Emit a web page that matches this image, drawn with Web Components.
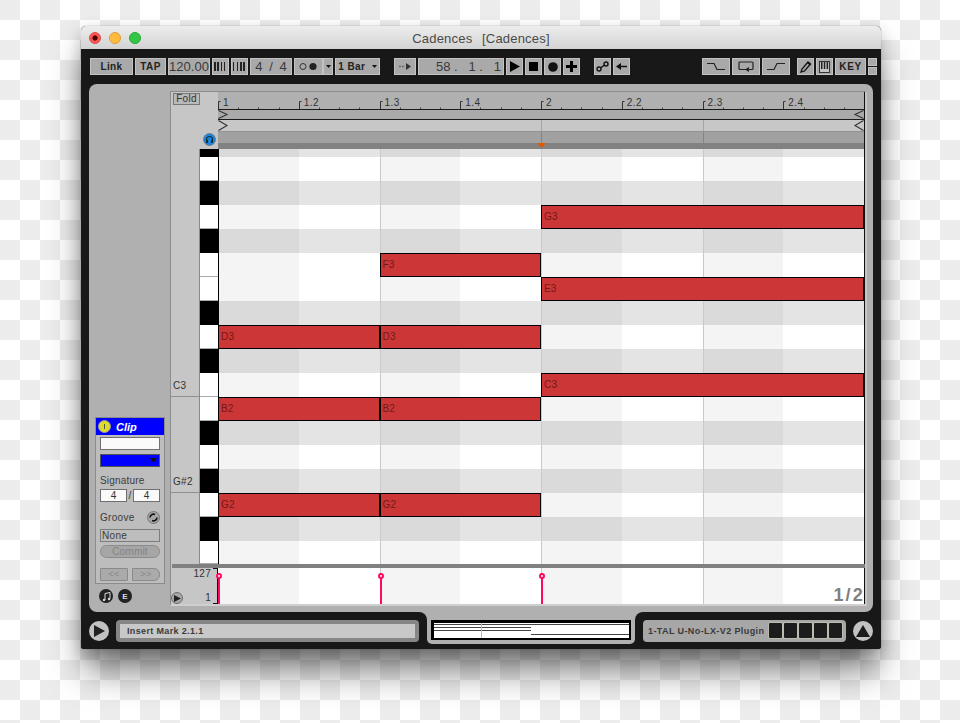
<!DOCTYPE html>
<html><head><meta charset="utf-8"><title>Cadences</title>
<style>
html,body{margin:0;height:723px;overflow:hidden}
body{background:conic-gradient(#ececec 25%,#fff 0 50%,#ececec 0 75%,#fff 0) 0 0/40px 40px;background-position:20px 0;padding:26px 0 0 81px;box-sizing:border-box;font-family:"Liberation Sans",Arial,sans-serif}
</style></head><body>
<live-window>
  <live-toolbar></live-toolbar>
  <live-panel></live-panel>
  <live-bottom></live-bottom>
</live-window>
<script>
function def(name,css,html){
  customElements.define(name,class extends HTMLElement{
    constructor(){super();const r=this.attachShadow({mode:'open'});r.innerHTML='<style>'+css+'</style>'+(typeof html==='function'?html():html);}
  });
}
const tri=(w,h,c)=>`<svg width="${w}" height="${h}" viewBox="0 0 ${w} ${h}"><path d="M0 0H${w}L${w/2} ${h}Z" fill="${c}"/></svg>`;

def('live-window',`:host{display:block;width:800px;height:623px;border-radius:5px 5px 3px 3px;background:#181818;box-shadow:0 26px 34px -4px rgba(0,0,0,.5),0 6px 16px rgba(0,0,0,.22),0 0 0 1px rgba(0,0,0,.06)}
.title{height:23px;border-radius:5px 5px 0 0;background:linear-gradient(#ededed,#d3d3d3);display:flex;align-items:center;position:relative;padding-left:8px;box-sizing:border-box;gap:8px}
.l{width:12px;height:12px;border-radius:50%;box-sizing:border-box}
.t{position:absolute;left:0;right:0;text-align:center;font:13px "Liberation Sans",Arial,sans-serif;color:#4a4a4a;letter-spacing:.2px;word-spacing:1px;white-space:pre;top:5px}`,
`<div class="title"><span class="l" style="background:radial-gradient(circle,#4d0000 0 2.2px,#fc5753 3px);border:1px solid #df4744"></span><span class="l" style="background:#fdbc40;border:1px solid #de9f34"></span><span class="l" style="background:#33c748;border:1px solid #27aa35"></span><span class="t">Cadences  [Cadences]</span></div><slot></slot>`);

def('live-btn',`:host{display:flex;align-items:center;justify-content:center;box-sizing:border-box;height:17px;background:#a9a9a9;border:1px solid #c3c3c3;color:#222;font:bold 10px "Liberation Sans",Arial,sans-serif;letter-spacing:.4px;white-space:pre;flex:none}`,`<slot></slot>`);

const B=(w,s,x='')=>`<live-btn style="width:${w}px;${x}">${s}</live-btn>`;
const bars=(a)=>`<svg width="15" height="9">${a.map(([x,w])=>`<rect x="${x}" y="0" width="${w}" height="9" fill="#222"/>`).join('')}</svg>`;
const big='font:13px Liberation Sans,Arial,sans-serif;color:#3a3a3a;letter-spacing:0;';
def('live-toolbar',`:host{display:flex;align-items:center;height:35px;padding:0 5px 0 9px;gap:2px;box-sizing:border-box}
.tall{display:flex;flex-direction:column;gap:1px;flex:none}
.tall i{display:block;width:9px;height:8px;background:#a9a9a9;border:1px solid #c3c3c3;box-sizing:border-box}`,
B(43,'Link')+B(31,'TAP')+B(42,`<span style="${big}">120.00</span>`)
+B(17,bars([[1,2],[4,2],[8,1],[11,1]]))+B(17,bars([[1,1],[5,1],[8,2],[11,2]]))
+B(42,`<span style="${big}word-spacing:3px">4 / 4</span>`)
+B(29,'<svg width="20" height="9"><circle cx="4" cy="4.5" r="3" fill="none" stroke="#333"/><circle cx="14" cy="4.5" r="3.6" fill="#222"/></svg>','margin-right:-2px')
+B(10,tri(5,3,'#111'))+B(45,'1 Bar  '+tri(5,3,'#111'))
+B(22,'<svg width="14" height="9"><circle cx="2" cy="4.5" r="1" fill="#666"/><circle cx="5" cy="4.5" r="1" fill="#666"/><path d="M8 1l5 3.5-5 3.5z" fill="#333"/></svg>','margin-left:12px')
+B(86,`<span style="${big}width:80px;display:flex;justify-content:flex-end;white-space:pre">58 .   1 .   1</span>`)
+B(17,'<svg width="11" height="11"><path d="M1 0l10 5.5L1 11z" fill="#000"/></svg>')
+B(17,'<svg width="9" height="9"><rect width="9" height="9" fill="#000"/></svg>')
+B(17,'<svg width="10" height="10"><circle cx="5" cy="5" r="4.8" fill="#111"/></svg>')
+B(17,'<svg width="11" height="11"><path d="M4 0h3v4h4v3H7v4H4V7H0V4h4z" fill="#000"/></svg>')
+B(17,'<svg width="13" height="11"><circle cx="3" cy="8" r="2" fill="none" stroke="#111" stroke-width="1.4"/><circle cx="10" cy="3" r="2" fill="none" stroke="#111" stroke-width="1.4"/><path d="M4.5 7L8.5 4" stroke="#111" stroke-width="1.4"/></svg>','margin-left:12px')
+B(17,'<svg width="11" height="9"><path d="M0 4.5L5 1v2.7h6v1.6H5V8z" fill="#111"/></svg>')
+B(28,'<svg width="18" height="9"><path d="M0 1.5h7l3 6h8" fill="none" stroke="#222" stroke-width="1.2"/></svg>','margin-left:70px')
+B(28,'<svg width="16" height="11"><path d="M9 8.5H2a1 1 0 0 1-1-1V2a1 1 0 0 1 1-1h12a1 1 0 0 1 1 1v5.5a1 1 0 0 1-1 1h-3" fill="none" stroke="#222" stroke-width="1.2"/><path d="M11 6v5L7 8.5z" fill="#222"/></svg>')
+B(28,'<svg width="18" height="9"><path d="M0 7.5h7l3-6h8" fill="none" stroke="#222" stroke-width="1.2"/></svg>')
+B(17,'<svg width="12" height="12"><path d="M1 11l1-3 6-7 2.5 2-6 7z" fill="none" stroke="#111" stroke-width="1.3"/><path d="M7 2l3 2.5 1-1.5-2.5-2z" fill="#111"/></svg>','margin-left:5px')
+B(17,'<svg width="11" height="12"><rect x=".5" y=".5" width="10" height="11" fill="#c4c4c4" stroke="#333"/><path d="M2 1h1.5v7H2zM4.8 1h1.5v7H4.8zM7.6 1h1.5v7H7.6z" fill="#222"/></svg>')
+B(31,'KEY','letter-spacing:.6px')
+`<div class="tall"><i></i><i></i></div>`);

def('live-panel',`:host{display:flex;margin:0 8px;height:528px;background:#b0b0b0;border-radius:8px;padding:7px 5px 6px 0;box-sizing:border-box}`,
`<live-side></live-side><live-area></live-area>`);

def('live-side',`:host{display:flex;flex-direction:column;justify-content:flex-end;width:81px;flex:none;padding:0 5px 0 6px;box-sizing:border-box;font:10px "Liberation Sans",Arial,sans-serif;color:#333}
.r{display:flex;gap:5px;padding:4px 0 0 4px}
.c{width:14px;height:14px;border-radius:50%;background:#222;display:flex;align-items:center;justify-content:center;color:#ddd;font:bold 8px "Liberation Sans",Arial,sans-serif}`,
`<live-clip></live-clip><div class="r"><span class="c"><svg width="9" height="9"><path d="M3 1.5L8 .5V6.5M3 1.5V8" fill="none" stroke="#ddd"/><circle cx="2" cy="8" r="1.2" fill="#ddd"/><circle cx="7" cy="7" r="1.2" fill="#ddd"/></svg></span><span class="c">E</span></div><div style="height:3px"></div>`);

def('live-clip',`:host{display:block;height:167px;box-sizing:border-box;border:1px solid #8b8b8b;background:#bdbdbd;margin-bottom:1px;font:10px "Liberation Sans",Arial,sans-serif;color:#3c3c3c}
.h{height:17px;background:#00f;display:flex;align-items:center;padding-left:2px;color:#fff;font:italic bold 11px "Liberation Sans",Arial,sans-serif;gap:5px}
.y{width:13px;height:13px;border-radius:50%;background:#dcdc28;border:1px solid #999;box-sizing:border-box;display:flex;align-items:center;justify-content:center}
.y:after{content:"";width:1px;height:5px;background:#555}
.b{padding:2px 4px 0;display:flex;flex-direction:column}
.w{height:13px;background:#fafafa;border:1px solid #6f6f6f;box-sizing:border-box}
.d{height:13px;background:#00f;border:1px solid #555;box-sizing:border-box;margin-top:4px;display:flex;align-items:center;justify-content:flex-end;padding-right:2px}
.l{margin-top:7px;height:13px;line-height:13px;font-size:10px;letter-spacing:.2px}
.s{display:flex;align-items:center;margin-top:2px;height:13px}
.s span{width:27px;height:13px;box-sizing:border-box;background:#fafafa;border:1px solid #6f6f6f;text-align:center;line-height:11px;color:#333}
.s em{width:6px;text-align:center;font-style:normal}
.g{display:flex;align-items:center;justify-content:space-between;margin-top:8px;height:14px;font-size:10px;letter-spacing:.3px}
.n{height:13px;border:1px solid #7c7c7c;box-sizing:border-box;margin-top:5px;line-height:11px;padding-left:1px;font-size:10px;letter-spacing:.3px}
.m{height:13px;border:1px solid #8a8a8a;border-radius:7px;background:#a6a6a6;box-sizing:border-box;margin-top:3px;text-align:center;line-height:11px;color:#848484;font-size:10px;letter-spacing:.2px}
.p{display:flex;gap:4px;margin-top:10px}
.p span{flex:1;height:13px;box-sizing:border-box;border:1px solid #8a8a8a;border-radius:1px;background:#aaa;text-align:center;line-height:10px;color:#888;font-size:9px;letter-spacing:.5px}
.p span+span{border-radius:0 6px 6px 0}
.i{width:13px;height:13px;border-radius:50%;background:#a5a5a5;border:1px solid #777;box-sizing:border-box;display:flex;align-items:center;justify-content:center}`,
`<div class="h"><span class="y"></span><span>Clip</span></div><div class="b"><div class="w"></div><div class="d">${tri(7,5,'#111')}</div>
<div class="l">Signature</div><div class="s"><span>4</span><em>/</em><span>4</span></div>
<div class="g"><span>Groove</span><span class="i"><svg width="9" height="9"><path d="M1 4.5A3.500 3.500 0 0 1 6 1.500M8 4.500A3.500 3.500 0 0 1 3 7.500" fill="none" stroke="#111" stroke-width="1.6"/></svg></span></div>
<div class="n">None</div><div class="m">Commit</div><div class="p"><span>&lt;&lt;</span><span>&gt;&gt;</span></div></div>`);

def('live-area',`:host{display:flex;flex-direction:column;width:697px;height:515px;box-sizing:border-box;border:1px solid #8d8d8d;border-bottom:2px solid #cfcfcf;border-right:2px solid #c4c4c4;background:#c6c6c6;font:10px "Liberation Sans",Arial,sans-serif}`,
`<live-head></live-head><live-roll></live-roll><live-vel></live-vel>`);

def('live-head',`:host{display:flex;height:57px;flex:none}
.fold{width:47px;flex:none;box-sizing:border-box;padding:1px 0 0 2px;position:relative}
.fb{width:27px;height:12px;border:1px solid #777;box-sizing:border-box;background:#b9b9b9;text-align:center;font-size:10px;line-height:10px;color:#333;letter-spacing:.3px}
.hp{position:absolute;left:32px;top:41px;width:13px;height:13px;border-radius:50%;background:#1d84de;border:1px solid #6a7f90;box-sizing:border-box;display:flex;align-items:center;justify-content:center}
.m{flex:none;display:flex;flex-direction:column;position:relative;box-sizing:border-box;border-right:1px solid #111;border-left:1px solid transparent;margin-left:-1px;width:648px}
.rul{height:18px;box-sizing:border-box;background:#b0b0b0;border-bottom:1px solid #1a1a1a;display:grid;grid-template-columns:repeat(8,1fr);position:relative;color:#333;font-size:10px;letter-spacing:.4px}
.rul span{padding:6px 0 0 5px;line-height:10px}
.rul svg{position:absolute;left:0;top:0}
.a{height:10px;box-sizing:border-box;background:#aaa;border-bottom:1px solid #1a1a1a;display:flex;justify-content:space-between}
.b{height:12px;box-sizing:border-box;background:#c7c7c7;border-bottom:1px solid #929292;display:flex;justify-content:space-between;position:relative}
.c{height:11px;background:#a1a1a1;position:relative}
.d{height:6px;background:#828282;position:relative}
.v{position:absolute;top:0;bottom:0;width:1px;background:rgba(0,0,0,.17)}
.o{position:absolute;left:319px;top:0;display:block}
svg{display:block}`,
()=>{
let maj='';for(let i=0;i<8;i++){const x=Math.round(i*80.75)+.5;maj+=`<path d="M${x} 9.5V17M${x} 9.5h2" stroke="#333" fill="none"/>`;}
let sub='';for(let i=0;i<32;i++){if(i%4){const x=Math.round(i*20.19)+.5;sub+=`<path d="M${x} 15.5V17" stroke="#444" fill="none"/>`;}}
const R=h=>`<svg width="12" height="${h}"><path d="M.5 .5L9 ${h/2}L.5 ${h-.5}" fill="none" stroke="#333" stroke-width="1.1"/></svg>`,L=h=>`<svg width="12" height="${h}"><path d="M11.5 .5L3 ${h/2}L11.5 ${h-.5}" fill="none" stroke="#333" stroke-width="1.1"/></svg>`;
return `<div class="fold"><div class="fb">Fold</div><div class="hp"><svg width="9" height="9"><path d="M1.5 6V4.5a3 3 0 0 1 6 0V6" fill="none" stroke="#133" stroke-width="1.2"/><rect x="1" y="5" width="2" height="3" fill="#133"/><rect x="6" y="5" width="2" height="3" fill="#133"/></svg></div></div>
<div class="m"><div class="rul"><svg width="646" height="18">${maj}${sub}</svg><span>1</span><span>1.2</span><span>1.3</span><span>1.4</span><span>2</span><span>2.2</span><span>2.3</span><span>2.4</span></div>
<div class="a">${R(9)}${L(9)}</div><div class="b">${R(11)}${L(11)}<i class="v" style="left:323px"></i><i class="v" style="left:485px"></i></div>
<div class="c"><i class="v" style="left:323px"></i><i class="v" style="left:485px"></i></div><div class="d"><svg class="o" width="9" height="5"><path d="M0 0H9L4.5 5Z" fill="#e05a00"/></svg></div></div>`;});

const rows='bwbwbwwbwbwwbwbwbw';
const NOTES=[[3,5,9,'G3'],[5,3,5,'F3'],[6,5,9,'E3'],[8,1,3,'D3'],[8,3,5,'D3'],[10,5,9,'C3'],[11,1,3,'B2'],[11,3,5,'B2'],[15,1,3,'G2'],[15,3,5,'G2']];
const RT='8px repeat(16,24px) 23px';
def('live-note',`:host{display:block;box-sizing:border-box;height:24px;background:#cc3636;border:1px solid #000;color:#701a1a;font:10px "Liberation Sans",Arial,sans-serif;line-height:22px;padding-left:2px;z-index:2;letter-spacing:.2px}`,`<slot></slot>`);
def('live-roll',`:host{display:flex;height:415px;flex:none}
.lab{width:28px;flex:none;display:grid;grid-template-rows:${RT}}
.lab div{box-sizing:border-box;color:#333;padding:7px 0 0 2px;font-size:10px;line-height:12px;letter-spacing:.3px}
.lab .rule{border-bottom:1px solid #8f8f8f}
.keys{width:18px;flex:none;display:grid;grid-template-rows:${RT};border-left:1px solid #8a8a8a}
.keys i{display:block;box-sizing:border-box}
.keys .b{background:#000}.keys .w{background:#fff;border-bottom:1px solid #aaa}
.grid{width:647px;flex:none;box-sizing:border-box;display:grid;grid-template-columns:repeat(8,1fr);grid-template-rows:${RT};border-right:1px solid #111;overflow:hidden;background:#fff}
.row{grid-column:1/-1}.row.b{background:#e4e4e4}.row.w{background:#fff}
.band{grid-row:1/-1;background:rgba(0,0,0,.042)}
.ln{grid-row:1/-1;width:1px;background:#c9c9c9;z-index:1}
.edge{grid-row:1/-1;grid-column:1;width:1px;background:#000;z-index:1}`,
()=>{let lab='',keys='',g='';
 for(let i=0;i<18;i++){let t='',c='';if(i==10)t='C3',c='rule';if(i==14)t='G#2',c='rule';lab+=`<div class="${c}" style="grid-row:${i+1}">${t}</div>`;keys+=`<i class="${rows[i]}"></i>`;g+=`<div class="row ${rows[i]}" style="grid-row:${i+1}"></div>`;}
 for(const c of [1,3,5,7])g+=`<div class="band" style="grid-column:${c}"></div>`;
 for(const c of [3,5,7])g+=`<div class="ln" style="grid-column:${c}"></div>`;
 g+='<div class="edge"></div>';
 for(const [r,a,b,t] of NOTES)g+=`<live-note style="grid-row:${r+1};grid-column:${a}/${b}">${t}</live-note>`;
 return `<div class="lab">${lab}</div><div class="keys">${keys}</div><div class="grid">${g}</div>`;});

def('live-vel',`:host{display:flex;flex-direction:column;flex:none;height:40px}
.sep{height:4px;background:#808080;flex:none;margin-left:1px;width:693px}
.w{display:flex;flex:1}
.l{width:47px;flex:none;position:relative;font-size:10px;color:#333;display:flex;flex-direction:column;align-items:flex-end;justify-content:space-between;padding:0 7px 0 0;box-sizing:border-box;line-height:12px;letter-spacing:.3px}
.br{position:absolute;right:0;top:0;bottom:0;width:5px;border:1px solid #111;border-left:0;box-sizing:border-box}
.pl{position:absolute;left:0;bottom:0;width:12px;height:12px;border-radius:50%;background:#a8a8a8;border:1px solid #6e6e6e;box-sizing:border-box;display:flex;align-items:center;justify-content:center}
.g{width:647px;flex:none;box-sizing:border-box;display:grid;grid-template-columns:repeat(8,1fr);background:#fff;border-right:1px solid #111;position:relative}
.g>b{background:rgba(0,0,0,.042);grid-row:1;border-left:1px solid #c9c9c9}
.g>b:first-child{border-left:0}
.mk{position:absolute;top:5px;bottom:0;width:2px;background:#ff0a63}
.mk:before{content:"";position:absolute;left:-2px;top:0;width:6px;height:6px;border:2px solid #ff0a63;box-sizing:border-box;border-radius:50%;background:#fff}
.f{position:absolute;right:-1px;bottom:0;font:bold 18px "Liberation Sans",Arial,sans-serif;color:#7f7f7f;line-height:18px;letter-spacing:2.2px}`,
`<div class="sep"></div><div class="w"><div class="l"><span>127</span><span>1</span><div class="br"></div><div class="pl"><svg width="7" height="7"><path d="M0 0l7 3.5L0 7z" fill="#222"/></svg></div></div>
<div class="g"><b style="grid-column:1"></b><b style="grid-column:3"></b><b style="grid-column:5"></b><b style="grid-column:7"></b><i class="mk" style="left:0"></i><i class="mk" style="left:162px"></i><i class="mk" style="left:323px"></i><span class="f">1/2</span></div></div>`);

def('live-bottom',`:host{display:flex;height:37px;font:bold 9px "Liberation Sans",Arial,sans-serif;color:#3a3a3a;letter-spacing:.4px}
.left{width:346px;flex:none;background:#181818;border-radius:0 8px 0 3px;position:relative;z-index:1;display:flex;align-items:center;padding:0 8px;box-sizing:border-box;gap:7px}
.right{flex:1;background:#181818;border-radius:8px 0 3px 0;position:relative;z-index:1;display:flex;align-items:center;padding:0 8px;box-sizing:border-box;gap:7px}
.mid{width:208px;flex:none;height:32px;background:#b0b0b0;border-radius:0 0 5px 5px;position:relative;display:flex;align-items:flex-start;justify-content:center;padding-top:8px;box-sizing:border-box}
.mid:before,.mid:after{content:"";position:absolute;top:0;width:10px;height:10px;background:#b0b0b0}
.mid:before{left:-9px}.mid:after{right:-9px}
.rc{width:20px;height:20px;border-radius:50%;background:#c2c2c2;flex:none;display:flex;align-items:center;justify-content:center}
.st{width:303px;height:22px;background:#868686;border-radius:4px;padding:4px;box-sizing:border-box;flex:none}
.st div{background:#c8c8c8;height:14px;line-height:14px;padding-left:7px;letter-spacing:.35px}
.ov{width:200px;height:20px;background:#000;padding:3px 2px 2px 3px;box-sizing:border-box}
.ov svg{display:block}
.pl{width:203px;height:22px;background:#a7a7a7;border-radius:4px;display:flex;align-items:center;padding:0 4px 0 5px;box-sizing:border-box;flex:none;justify-content:space-between;white-space:nowrap}
.sq{display:flex;gap:2px}
.sq i{width:13px;height:15px;background:#1c1c1c;display:block;box-shadow:0 0 0 1px rgba(205,205,185,.55);border-radius:1px}`,
`<div class="left"><span class="rc"><svg width="11" height="12"><path d="M0 0l11 6L0 12z" fill="#222"/></svg></span><div class="st"><div>Insert Mark 2.1.1</div></div></div>
<div class="mid"><div class="ov"><svg width="195" height="15"><rect width="195" height="15" fill="#fff"/><path d="M0 1.5H97M0 4.5H97M0 7.5H97M97 1.5H195M97 11.5H195" stroke="#444"/><path d="M47.5 0V15" stroke="#bbb"/></svg></div></div>
<div class="right"><div class="pl"><span>1-TAL U-No-LX-V2 Plugin</span><span class="sq"><i></i><i></i><i></i><i></i><i></i></span></div><span class="rc"><svg width="14" height="12"><path d="M7 0l7 12H0z" fill="#1a1a1a"/></svg></span></div>`);
</script>
</body></html>
